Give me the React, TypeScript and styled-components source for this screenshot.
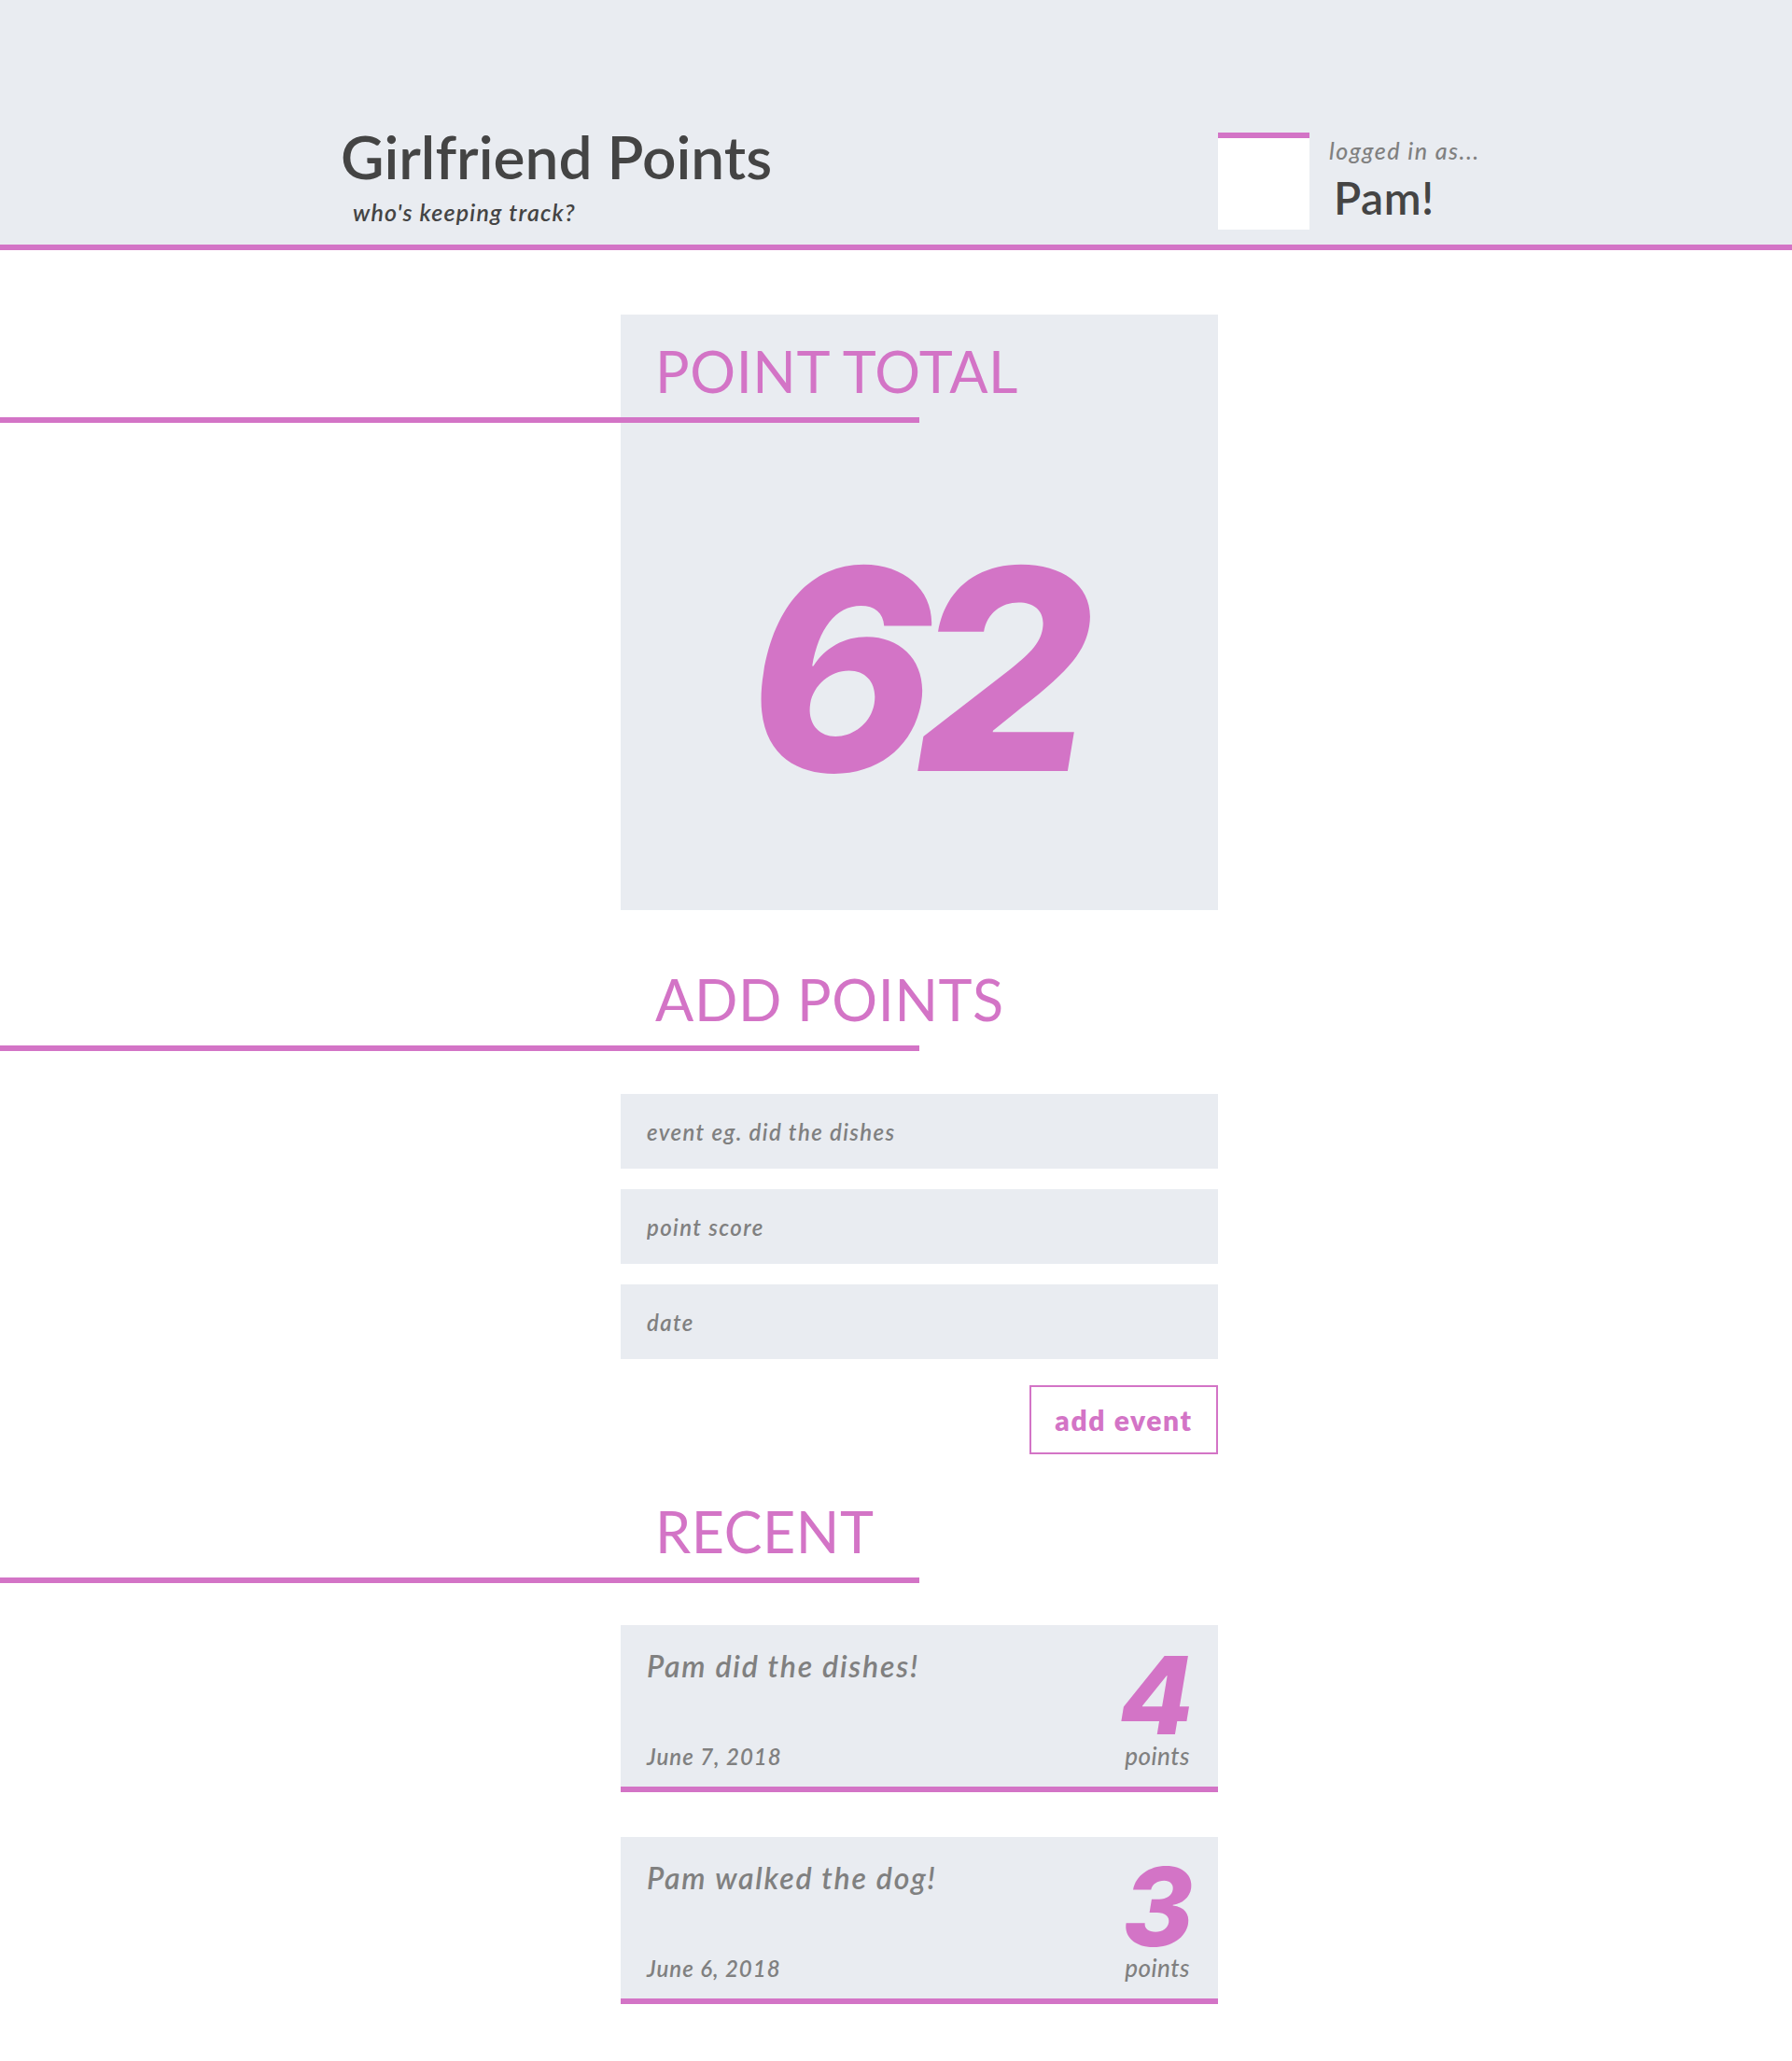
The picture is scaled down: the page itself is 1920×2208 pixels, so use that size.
import React from 'react';
import styled, { createGlobalStyle } from 'styled-components';

const PINK = '#d374c6';
const GREY_BG = '#e9ecf1';
const DARK = '#444444';
const MUTED = '#808080';

const GlobalStyle = createGlobalStyle`
  html, body {
    margin: 0;
    padding: 0;
    background: #ffffff;
  }
  body {
    font-family: Lato, "Noto Sans", sans-serif;
  }
  * {
    box-sizing: border-box;
  }
`;

const Header = styled.header`
  height: 268px;
  background: ${GREY_BG};
  border-bottom: 6px solid ${PINK};
  display: grid;
  grid-template-columns: 940px auto;
  align-items: start;
  padding: 136px 0 0 365px;
`;

const Brand = styled.div`
  display: flex;
  flex-direction: column;
`;

const Title = styled.h1`
  margin: 0;
  font-size: 64px;
  line-height: 64px;
  font-weight: 600;
  color: ${DARK};
`;

const Tagline = styled.p`
  margin: 15px 0 0 13px;
  font-size: 25px;
  line-height: 25px;
  font-style: italic;
  font-weight: 600;
  color: ${DARK};
  letter-spacing: 1.2px;
`;

const User = styled.div`
  display: flex;
  gap: 21px;
  margin-top: 6px;
`;

const Avatar = styled.div`
  width: 98px;
  height: 104px;
  background: #ffffff;
  border-top: 6px solid ${PINK};
`;

const UserText = styled.div`
  padding-top: 7px;
`;

const LoggedIn = styled.div`
  font-size: 25px;
  line-height: 25px;
  font-style: italic;
  font-weight: 500;
  color: ${MUTED};
  letter-spacing: 1.5px;
`;

const UserName = styled.div`
  margin: 14px 0 0 5px;
  font-size: 48px;
  line-height: 48px;
  font-weight: 600;
  color: ${DARK};
  letter-spacing: 0.5px;
`;

const Main = styled.main`
  width: 640px;
  margin-left: calc(50% - 295px);
  padding: 69px 0 0;
`;

const TotalCard = styled.section`
  height: 638px;
  background: ${GREY_BG};
  padding-top: 31px;
`;

const HeadingBlock = styled.div<{ $top: number }>`
  margin-top: ${(p) => p.$top}px;
`;

const HeadingText = styled.h2`
  margin: 0;
  padding-left: 37px;
  font-size: 61px;
  line-height: 60px;
  font-weight: 400;
  color: ${PINK};
  letter-spacing: 0.6px;
`;

const HeadingRule = styled.div`
  height: 6px;
  background: ${PINK};
  margin: 19px 0 0 calc(295px - 50vw);
  width: calc(50vw + 25px);
`;

const TotalNumber = styled.div`
  margin-top: 114px;
  padding-right: 16px;
  text-align: center;
  font-family: Inter, Lato, sans-serif;
  font-size: 300px;
  line-height: 300px;
  font-weight: 800;
  font-style: italic;
  color: ${PINK};
  letter-spacing: -20px;
`;

const Form = styled.form`
  display: flex;
  flex-direction: column;
  gap: 22px;
  margin-top: 46px;
`;

const Field = styled.input`
  width: 100%;
  height: 80px;
  border: none;
  outline: none;
  background: ${GREY_BG};
  padding: 0 28px;
  font-family: Lato, "Noto Sans", sans-serif;
  font-size: 24px;
  font-style: italic;
  font-weight: 600;
  color: ${DARK};
  letter-spacing: 1.4px;

  &::placeholder {
    color: ${MUTED};
    opacity: 1;
  }
`;

const SubmitButton = styled.button`
  align-self: flex-end;
  width: 202px;
  height: 74px;
  margin-top: 6px;
  background: #ffffff;
  border: 2px solid ${PINK};
  font-family: Lato, "Noto Sans", sans-serif;
  font-size: 30px;
  font-weight: 800;
  color: ${PINK};
  letter-spacing: 1.6px;
  cursor: pointer;
`;

const EventList = styled.div`
  display: flex;
  flex-direction: column;
  gap: 48px;
  margin-top: 45px;
`;

const EventCard = styled.article`
  height: 179px;
  background: ${GREY_BG};
  border-bottom: 6px solid ${PINK};
  padding: 28px 30px 20px 28px;
  display: flex;
  justify-content: space-between;
`;

const EventInfo = styled.div`
  display: flex;
  flex-direction: column;
  justify-content: space-between;
`;

const EventTitle = styled.div`
  font-size: 32px;
  line-height: 32px;
  font-style: italic;
  font-weight: 600;
  color: ${MUTED};
  letter-spacing: 1.8px;
`;

const EventDate = styled.div`
  font-size: 24px;
  line-height: 25px;
  font-style: italic;
  font-weight: 600;
  color: ${MUTED};
  letter-spacing: 1px;
`;

const Score = styled.div`
  display: flex;
  flex-direction: column;
  justify-content: space-between;
  align-items: flex-end;
`;

const ScoreValue = styled.div`
  margin-top: 1px;
  font-family: Inter, Lato, sans-serif;
  font-size: 116px;
  line-height: 92px;
  font-weight: 800;
  font-style: italic;
  color: ${PINK};
  letter-spacing: -4px;
`;

const ScoreLabel = styled.div`
  font-size: 26px;
  line-height: 25px;
  font-style: italic;
  font-weight: 500;
  color: ${MUTED};
  letter-spacing: 0.5px;
`;

type Heading = { title: string; top: number };

const SectionHeading: React.FC<Heading> = ({ title, top }) => (
  <HeadingBlock $top={top}>
    <HeadingText>{title}</HeadingText>
    <HeadingRule />
  </HeadingBlock>
);

const events = [
  { title: 'Pam did the dishes!', date: 'June 7, 2018', points: 4 },
  { title: 'Pam walked the dog!', date: 'June 6, 2018', points: 3 },
];

export default function App() {
  return (
    <>
      <GlobalStyle />
      <Header>
        <Brand>
          <Title>Girlfriend Points</Title>
          <Tagline>who's keeping track?</Tagline>
        </Brand>
        <User>
          <Avatar />
          <UserText>
            <LoggedIn>logged in as...</LoggedIn>
            <UserName>Pam!</UserName>
          </UserText>
        </User>
      </Header>
      <Main>
        <TotalCard>
          <SectionHeading title="POINT TOTAL" top={0} />
          <TotalNumber>62</TotalNumber>
        </TotalCard>

        <SectionHeading title="ADD POINTS" top={66} />
        <Form onSubmit={(e) => e.preventDefault()}>
          <Field placeholder="event eg. did the dishes" />
          <Field placeholder="point score" />
          <Field placeholder="date" />
          <SubmitButton type="submit">add event</SubmitButton>
        </Form>

        <SectionHeading title="RECENT" top={53} />
        <EventList>
          {events.map((ev) => (
            <EventCard key={ev.title}>
              <EventInfo>
                <EventTitle>{ev.title}</EventTitle>
                <EventDate>{ev.date}</EventDate>
              </EventInfo>
              <Score>
                <ScoreValue>{ev.points}</ScoreValue>
                <ScoreLabel>points</ScoreLabel>
              </Score>
            </EventCard>
          ))}
        </EventList>
      </Main>
    </>
  );
}
